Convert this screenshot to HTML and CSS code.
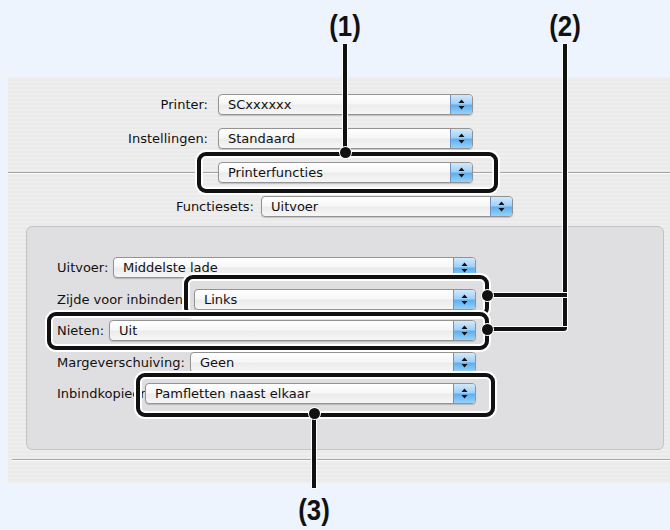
FILE: index.html
```html
<!DOCTYPE html>
<html lang="nl">
<head>
<meta charset="utf-8">
<title>Printerfuncties</title>
<link rel="stylesheet" href="styles.css">
</head>
<body>
<div class="page">
  <div class="head"></div>
  <div class="panel">
    <div class="row row-top">
      <span class="lbl lbl-top">Printer:</span>
      <div class="popup popup-top"><span class="val">SCxxxxxx</span><span class="arrows"><svg width="7" height="11" viewBox="0 0 7 11"><path d="M3.5 0.5L6.5 4H0.5Z M3.5 10.5L6.5 7H0.5Z" fill="#111"/></svg></span></div>
    </div>
    <div class="row row-top">
      <span class="lbl lbl-top">Instellingen:</span>
      <div class="popup popup-top"><span class="val">Standaard</span><span class="arrows"><svg width="7" height="11" viewBox="0 0 7 11"><path d="M3.5 0.5L6.5 4H0.5Z M3.5 10.5L6.5 7H0.5Z" fill="#111"/></svg></span></div>
    </div>
    <div class="row row-top sep-row">
      <span class="lbl lbl-top"></span>
      <div class="popup popup-top"><span class="val">Printerfuncties</span><span class="arrows"><svg width="7" height="11" viewBox="0 0 7 11"><path d="M3.5 0.5L6.5 4H0.5Z M3.5 10.5L6.5 7H0.5Z" fill="#111"/></svg></span></div>
    </div>
    <div class="row row-func">
      <span class="lbl lbl-func">Functiesets:</span>
      <div class="popup popup-func"><span class="val">Uitvoer</span><span class="arrows"><svg width="7" height="11" viewBox="0 0 7 11"><path d="M3.5 0.5L6.5 4H0.5Z M3.5 10.5L6.5 7H0.5Z" fill="#111"/></svg></span></div>
    </div>
    <div class="group">
      <div class="row row-grp">
        <span class="lbl l-uit">Uitvoer:</span>
        <div class="popup popup-grp"><span class="val">Middelste lade</span><span class="arrows"><svg width="7" height="11" viewBox="0 0 7 11"><path d="M3.5 0.5L6.5 4H0.5Z M3.5 10.5L6.5 7H0.5Z" fill="#111"/></svg></span></div>
      </div>
      <div class="row row-grp">
        <span class="lbl l-zij">Zijde voor inbinden:</span>
        <div class="popup popup-grp"><span class="val">Links</span><span class="arrows"><svg width="7" height="11" viewBox="0 0 7 11"><path d="M3.5 0.5L6.5 4H0.5Z M3.5 10.5L6.5 7H0.5Z" fill="#111"/></svg></span></div>
      </div>
      <div class="row row-grp">
        <span class="lbl l-nie">Nieten:</span>
        <div class="popup popup-grp"><span class="val">Uit</span><span class="arrows"><svg width="7" height="11" viewBox="0 0 7 11"><path d="M3.5 0.5L6.5 4H0.5Z M3.5 10.5L6.5 7H0.5Z" fill="#111"/></svg></span></div>
      </div>
      <div class="row row-grp">
        <span class="lbl l-mar">Margeverschuiving:</span>
        <div class="popup popup-grp"><span class="val">Geen</span><span class="arrows"><svg width="7" height="11" viewBox="0 0 7 11"><path d="M3.5 0.5L6.5 4H0.5Z M3.5 10.5L6.5 7H0.5Z" fill="#111"/></svg></span></div>
      </div>
      <div class="row row-grp">
        <span class="lbl l-inb">Inbindkopieën:</span>
        <div class="popup popup-grp"><span class="val">Pamfletten naast elkaar</span><span class="arrows"><svg width="7" height="11" viewBox="0 0 7 11"><path d="M3.5 0.5L6.5 4H0.5Z M3.5 10.5L6.5 7H0.5Z" fill="#111"/></svg></span></div>
      </div>
    </div>
    <div class="bottom-sep"></div>
  </div>

  <div class="callout c1"></div>
  <div class="callout c2a"></div>
  <div class="callout c2b"></div>
  <div class="callout c3"></div>

  <div class="vline v1"></div>
  <div class="vline v2"></div>
  <div class="vline v3"></div>
  <div class="hline h2a"></div>
  <div class="hline h2b"></div>

  <div class="dot d1"></div>
  <div class="dot d2a"></div>
  <div class="dot d2b"></div>
  <div class="dot d3"></div>

  <div class="num n1">(1)</div>
  <div class="num n2">(2)</div>
  <div class="num n3">(3)</div>
</div>
</body>
</html>
```
FILE: styles.css
```css
* { box-sizing: border-box; }
html, body { margin: 0; padding: 0; }
body {
  background: #edf4fd;
  font-family: "DejaVu Sans", "Liberation Sans", sans-serif;
  font-size: 13px;
  color: #111;
}
.page {
  position: relative;
  width: 670px;
  height: 530px;
  overflow: hidden;
}
.head { height: 77px; }
.panel {
  margin-left: 8px;
  height: 406px;
  padding-top: 17px;
  background: repeating-linear-gradient(to bottom, #eeeeee 0 2px, #eaeaea 2px 4px);
}
.row {
  display: flex;
  align-items: center;
  height: 21px;
}
.lbl {
  white-space: nowrap;
  overflow: hidden;
  flex: none;
}
.row-top { margin-bottom: 13px; }
.lbl-top { width: 210px; padding-right: 10px; text-align: right; }
.popup-top { width: 255px; }
.sep-row {
  background: linear-gradient(to bottom, transparent 0 10px, #a3a3a3 10px 11px, #fbfbfb 11px 12px, transparent 12px);
}
.row-func { margin-top: 1px; }
.lbl-func { width: 253px; padding-right: 7px; text-align: right; }
.popup-func { width: 252px; }

.group {
  margin: 9px 6px 0 18px;
  height: 224px;
  border: 1px solid #c4c4c6;
  border-radius: 6px;
  background: #dfdfe1;
  padding: 30px 187px 0 30px;
}
.row-grp { margin-bottom: 10.5px; }
.l-uit { width: 56px; }
.l-zij { width: 137px; }
.l-nie { width: 52px; }
.l-mar { width: 133px; }
.l-inb { width: 88px; }
.popup-grp { flex: 1; }

.bottom-sep {
  margin: 9px 0 0 4px;
  height: 2px;
  border-top: 1px solid #a8a8aa;
  border-bottom: 1px solid #fafafa;
}

.popup {
  display: flex;
  height: 21px;
  border: 1px solid #939393;
  border-radius: 4px;
  overflow: hidden;
  background: linear-gradient(to bottom, #ffffff 0%, #f7f7f7 45%, #ececec 55%, #f6f6f6 100%);
  box-shadow: 0 1px 1px rgba(0,0,0,0.18);
}
.val {
  flex: 1;
  padding-left: 9px;
  line-height: 19px;
  color: #111;
  white-space: nowrap;
  overflow: hidden;
}
.arrows {
  flex: none;
  width: 22px;
  display: flex;
  align-items: center;
  justify-content: center;
  border-left: 1px solid #6f93c4;
  background: linear-gradient(to bottom, #d2e9fc 0%, #a0d1f8 45%, #62afee 55%, #95d2fb 100%);
}

/* annotation overlays */
.callout {
  position: absolute;
  border: 4px solid #111;
  border-radius: 9px;
  box-shadow: 0 0 0 2px #fff, inset 0 0 0 2px #fff;
}
.c1 { left: 197px; top: 152px; width: 301px; height: 41px; }
.c2a { left: 184px; top: 275px; width: 305px; height: 42px; }
.c2b { left: 47px; top: 312px; width: 442px; height: 38px; }
.c3 { left: 136px; top: 373px; width: 359px; height: 44px; }

.vline, .hline {
  position: absolute;
  background: #111;
  box-shadow: 0 0 0 1px #fff;
}
.v1 { left: 343px; top: 44px; width: 4px; height: 108px; }
.v2 { left: 563px; top: 44px; width: 4px; height: 287px; border-bottom-right-radius: 3px; }
.v3 { left: 312px; top: 414px; width: 4px; height: 74px; }
.h2a { left: 489px; top: 293px; width: 78px; height: 4px; }
.h2b { left: 489px; top: 327px; width: 78px; height: 4px; border-bottom-right-radius: 3px; }

.dot {
  position: absolute;
  width: 11px;
  height: 11px;
  border-radius: 50%;
  background: #111;
  box-shadow: 0 0 0 1px #fff;
}
.d1 { left: 340px; top: 147px; }
.d2a { left: 482px; top: 290px; }
.d2b { left: 482px; top: 324px; }
.d3 { left: 309px; top: 408px; }

.num {
  position: absolute;
  width: 60px;
  text-align: center;
  font-family: "Liberation Sans", "Arial", sans-serif;
  font-weight: bold;
  font-size: 30px;
  line-height: 32px;
  color: #111;
  transform: scaleX(0.86);
}
.n1 { left: 315px; top: 10px; }
.n2 { left: 535px; top: 10px; }
.n3 { left: 284px; top: 494px; }
```
